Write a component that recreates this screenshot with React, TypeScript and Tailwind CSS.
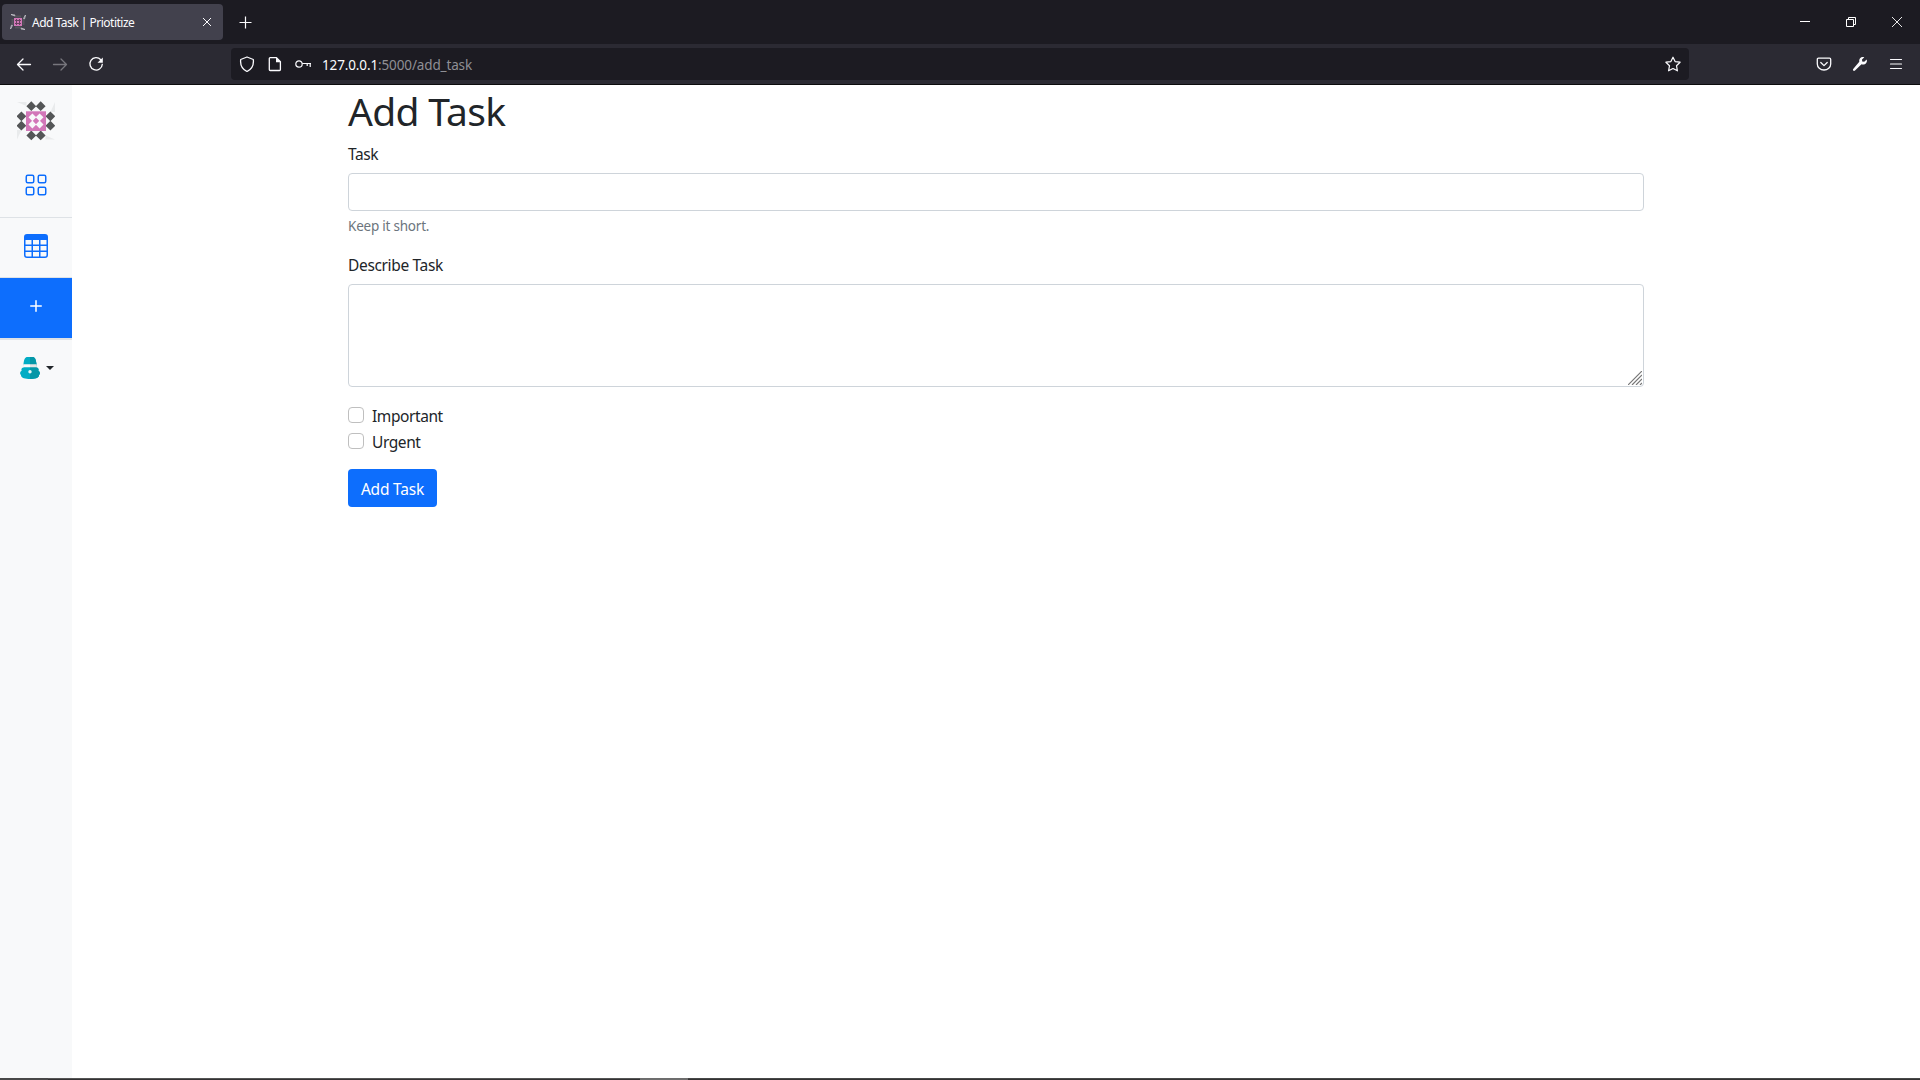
import React from "react";
import { BsGrid, BsTable, BsPlus } from "react-icons/bs";

const diamond = (cx: number, cy: number, r: number) =>
  `M${cx} ${cy - r}L${cx + r} ${cy}L${cx} ${cy + r}L${cx - r} ${cy}Z`;

function Logo() {
  const outer = [[14.3, 5.2], [23.7, 5.2], [14.3, 34.4], [23.7, 34.4], [4.4, 15.3], [4.4, 24.7], [33.4, 15.3], [33.4, 24.7]];
  const inner = [[15.4, 16.3], [22.6, 16.3], [15.4, 23.5], [22.6, 23.5]];
  return (
    <svg width="38" height="40" viewBox="0 0 38 40">
      <path d="M0 1h9.500v4zM38 1v10h-4.500zM0 38.500v-9.500h4.500zM38 38.500h-9.500v-4z" fill="#e9ebec" />
      <path d={outer.map(([x, y]) => diamond(x, y, 4.9)).join("")} fill="#545657" />
      <rect x="9" y="10.300" width="20" height="19.700" fill="#d277b8" />
      <path d={inner.map(([x, y]) => diamond(x, y, 3.9)).join("")} fill="#f8f9fa" />
    </svg>
  );
}

function Favicon() {
  return (
    <svg width="16" height="16" viewBox="0 0 16 16" fill="none">
      <path d="M1 .5l4 .5v1zM15.500 1l-1 4-1-.5zM.5 15l1-4 1 .5zM15 15.500l-4-.5v-1z" stroke="#c9c9cf" strokeWidth=".8" />
      <path d="M5 2.500h6M5 13.500h6M2.500 5v6M13.500 5v6" stroke="#56545d" strokeWidth="2" />
      <rect x="4" y="4" width="8" height="8" fill="#d277b8" />
      <path d="M6.500 5v6M9.500 5v6M5 6.500h6M5 9.500h6" stroke="#68435f" strokeWidth="1" />
    </svg>
  );
}

function Avatar() {
  return (
    <svg width="20" height="22" viewBox="0 0 20 22">
      <path d="M3.500 7C4 2.500 5 0 7.500 0h5C15 0 16 2.500 16.500 7v3.500c2 .5 2.500 2 1.800 3.200 2 1 2 3.400.7 4.300.3 3-4.500 4-9 4s-9.300-1-9-4c-1.300-.9-1.300-3.300.7-4.300C1 12.500 1.500 11 3.500 10.500z" fill="#02acc4" />
      <path d="M10 0h2.500C15 0 16 2.500 16.500 7v3.500c2 .5 2.500 2 1.800 3.200 2 1 2 3.400.7 4.300.3 3-4.500 4-9 4z" fill="#0497a7" />
      <path d="M3.300 7.300h6.700v2.900H3z" fill="#fafafa" />
      <path d="M10 7.300h6.700l.3 2.900h-7z" fill="#e3e5e5" />
      <circle cx="10" cy="14.700" r="1.700" fill="#e8f6f7" />
    </svg>
  );
}

function TitleBar() {
  return (
    <div className="flex h-11 items-center bg-[#1c1b22] text-[#fbfbfe]">
      <div className="ml-[2px] flex h-9 w-[221px] items-center rounded-[4px] bg-[#42414d] pl-2 pr-[10px]">
        <Favicon />
        <span className="ml-[6px] mt-[2px] flex-1 whitespace-nowrap text-[12px] tracking-[-0.500px]">Add Task | Priotitize</span>
        <svg width="12" height="12" viewBox="0 0 12 12" fill="none" stroke="currentColor" strokeWidth="1">
          <path d="M2 2l8 8M10 2l-8 8" />
        </svg>
      </div>
      <svg className="ml-[16px] mt-px" width="13" height="13" viewBox="0 0 13 13" fill="none" stroke="currentColor" strokeWidth="1.200">
        <path d="M6.500.500v12M.500 6.500h12" />
      </svg>
      <div className="ml-auto mr-[18px] flex items-center gap-[36px]">
        <svg width="10" height="10" viewBox="0 0 10 10"><path d="M0 4h10v1H0z" fill="#fff" /></svg>
        <svg width="10" height="10" viewBox="0 0 10 10" fill="none" stroke="#fff"><path d="M.5 2.500h7v7h-7zM2.500 2V.5h7v7H8" /></svg>
        <svg width="10" height="10" viewBox="0 0 10 10" fill="none" stroke="#fff" strokeWidth=".9"><path d="M0 0l10 10M10 0L0 10" /></svg>
      </div>
    </div>
  );
}

function NavBar() {
  return (
    <div className="flex h-[41px] items-center border-b border-[#0c0c0d] bg-[#2b2a33] text-[#fbfbfe]">
      <svg className="ml-4" width="16" height="16" viewBox="0 0 16 16" fill="none" stroke="currentColor" strokeWidth="1.300" strokeLinecap="round" strokeLinejoin="round">
        <path d="M14.500 8.500H1.500M7 3L1.500 8.500 7 14" />
      </svg>
      <svg className="ml-5" width="16" height="16" viewBox="0 0 16 16" fill="none" stroke="#77767d" strokeWidth="1.300" strokeLinecap="round" strokeLinejoin="round">
        <path d="M1.500 8.500h13M9 3l5.500 5.500L9 14" />
      </svg>
      <svg className="ml-5" width="16" height="16" viewBox="0 0 16 16" fill="none" stroke="currentColor" strokeWidth="1.350" strokeLinecap="round">
        <path d="M12.800 3.800A6.200 6.200 0 1 0 14.300 8.300" />
        <path d="M14.800 1.500v5.300H9.500z" fill="currentColor" stroke="none" />
      </svg>
      <div className="ml-[127px] flex h-8 w-[1458px] items-center rounded-[4px] bg-[#1c1b22] pl-2 pr-2">
        <svg width="16" height="16" viewBox="0 0 16 16" fill="none" stroke="currentColor" strokeWidth="1.300" strokeLinejoin="round">
          <path d="M8 1L14.300 3.500c.6 5-1.300 9.500-6.300 12C3 13 1.100 8.500 1.700 3.500z" />
        </svg>
        <svg className="ml-3" width="16" height="16" viewBox="0 0 16 16" fill="none" stroke="currentColor" strokeWidth="1.300" strokeLinejoin="round">
          <path d="M3.200 1.700h6.300L13.400 5.600v8c0 .6-.3.900-.9.900H3.200c-.6 0-.9-.3-.9-.9V2.600c0-.6.3-.9.900-.9z" />
          <path d="M9 1.500l5 4.700H9z" fill="currentColor" stroke="none" />
        </svg>
        <svg className="ml-3" width="16" height="16" viewBox="0 0 16 16" fill="none" stroke="currentColor" strokeWidth="1.200">
          <circle cx="4" cy="8" r="3.200" />
          <path d="M7.200 7.500h8.800M15.200 7.500v3.500M12.200 7.500v2.500" />
        </svg>
        <span className="ml-[11px] mt-[3px] whitespace-nowrap text-[13.500px] tracking-[-0.130px]">
          127.0.0.1<span className="text-[#8f8f95]">:5000/add_task</span>
        </span>
        <svg className="ml-auto" width="16" height="16" viewBox="0 0 16 16" fill="none" stroke="currentColor" strokeWidth="1.200" strokeLinejoin="round">
          <path d="M8 1.200l2.100 4.400 5 .6-3.600 3.500.9 5.100L8 12.500l-4.400 2.300.9-5.100L.9 6.200l5-.6z" />
        </svg>
      </div>
      <div className="ml-auto mr-4 flex items-center gap-5">
        <svg width="16" height="16" viewBox="0 0 16 16" fill="none" stroke="currentColor" strokeWidth="1.300" strokeLinecap="round" strokeLinejoin="round">
          <path d="M2.500 2.200h11c.7 0 1.200.5 1.200 1.200V8a6.700 6 0 0 1-13.400 0V3.400c0-.7.500-1.200 1.200-1.200zM4.800 6.500L8 9.600l3.200-3.100" />
        </svg>
        <svg width="16" height="16" viewBox="0 0 16 16" fill="currentColor">
          <path d="M14.700 3.400l-2.500 2.300-2-.3-.2-1.900L12.300 1.200C9.400.2 6.800 2.500 7.300 5.700L1.200 13c-.9 1.300.6 2.600 1.800 1.600L9.500 8.300c3.600.9 6.200-1.700 5.200-4.900z" />
        </svg>
        <svg width="16" height="16" viewBox="0 0 16 16" stroke="currentColor" strokeWidth="1.200" strokeLinecap="round">
          <path d="M2.500 3.500h11M2.500 8h11M2.500 12.500h11" />
        </svg>
      </div>
    </div>
  );
}

function Sidebar() {
  return (
    <aside className="flex w-[72px] shrink-0 flex-col bg-[#f8f9fa] text-[#0d6efd]">
      <div className="flex h-[72px] items-start justify-center pt-4"><Logo /></div>
      <div className="flex h-[61px] items-start justify-center border-b border-[#dee2e6] pt-4"><BsGrid size={24} /></div>
      <div className="flex h-[60px] items-start justify-center border-b border-[#dee2e6] pt-4"><BsTable size={24} /></div>
      <div className="flex h-[62px] items-start justify-center border-b-2 border-[#dee2e6] bg-[#0d6efd] pt-4 text-white"><BsPlus size={24} /></div>
      <div className="flex h-14 items-center gap-[6px] pl-5">
        <Avatar />
        <svg width="8" height="4" viewBox="0 0 8 4"><path d="M0 0h8L4 4z" fill="#212529" /></svg>
      </div>
    </aside>
  );
}

function Check({ label }: { label: string }) {
  return (
    <label className="mb-[2px] flex h-6">
      <span className="mt-1 h-4 w-4 rounded-[4px] border border-[#bfbfbf] bg-white" />
      <span className="ml-2 mt-px text-[15.500px] leading-[25px] tracking-[-0.420px]">{label}</span>
    </label>
  );
}

function TaskForm() {
  return (
    <main className="flex flex-1 flex-col items-center bg-white text-[#212529]">
      <form className="w-[1296px]">
        <h1 className="mb-2 h-12 whitespace-nowrap text-[39px] leading-[52px] tracking-[-0.700px]">Add Task</h1>
        <label className="mb-2 block h-6 whitespace-nowrap text-[15.500px] leading-[26px] tracking-[-0.400px]">Task</label>
        <div className="h-[38px] rounded-[4px] border border-[#ced4da]" />
        <p className="mb-4 mt-1 h-[21px] whitespace-nowrap text-[13.500px] leading-[23px] tracking-[-0.220px] text-[#6c757d]">Keep it short.</p>
        <label className="mb-2 block h-6 whitespace-nowrap text-[15.500px] leading-[26px] tracking-[-0.340px]">Describe Task</label>
        <div className="mb-4 flex h-[103px] items-end justify-end rounded-[4px] border border-[#ced4da] p-px">
          <svg width="14" height="14" viewBox="0 0 14 14" stroke="#777" strokeWidth="1.200">
            <path d="M0 14L14 0M4 14L14 4M8 14l6-6M12 14l2-2" />
          </svg>
        </div>
        <Check label="Important" />
        <Check label="Urgent" />
        <button type="button" className="mt-4 flex h-[38px] w-[89px] justify-center whitespace-nowrap rounded-[4px] bg-[#0d6efd] text-[15.500px] leading-[40px] tracking-[-0.200px] text-white">
          Add Task
        </button>
      </form>
    </main>
  );
}

export default function App() {
  return (
    <div className="flex h-[1080px] w-[1920px] flex-col overflow-hidden bg-white font-['Noto_Sans',sans-serif]">
      <TitleBar />
      <NavBar />
      <div className="flex flex-1">
        <Sidebar />
        <TaskForm />
      </div>
      <div className="flex h-[2px]">
        <div className="w-12 bg-[#484848]" />
        <div className="w-[592px] border-t border-[#555] bg-[#343233]" />
        <div className="w-12 bg-[#6d6d6d]" />
        <div className="flex-1 border-t border-[#484848] bg-[#343233]" />
      </div>
    </div>
  );
}
